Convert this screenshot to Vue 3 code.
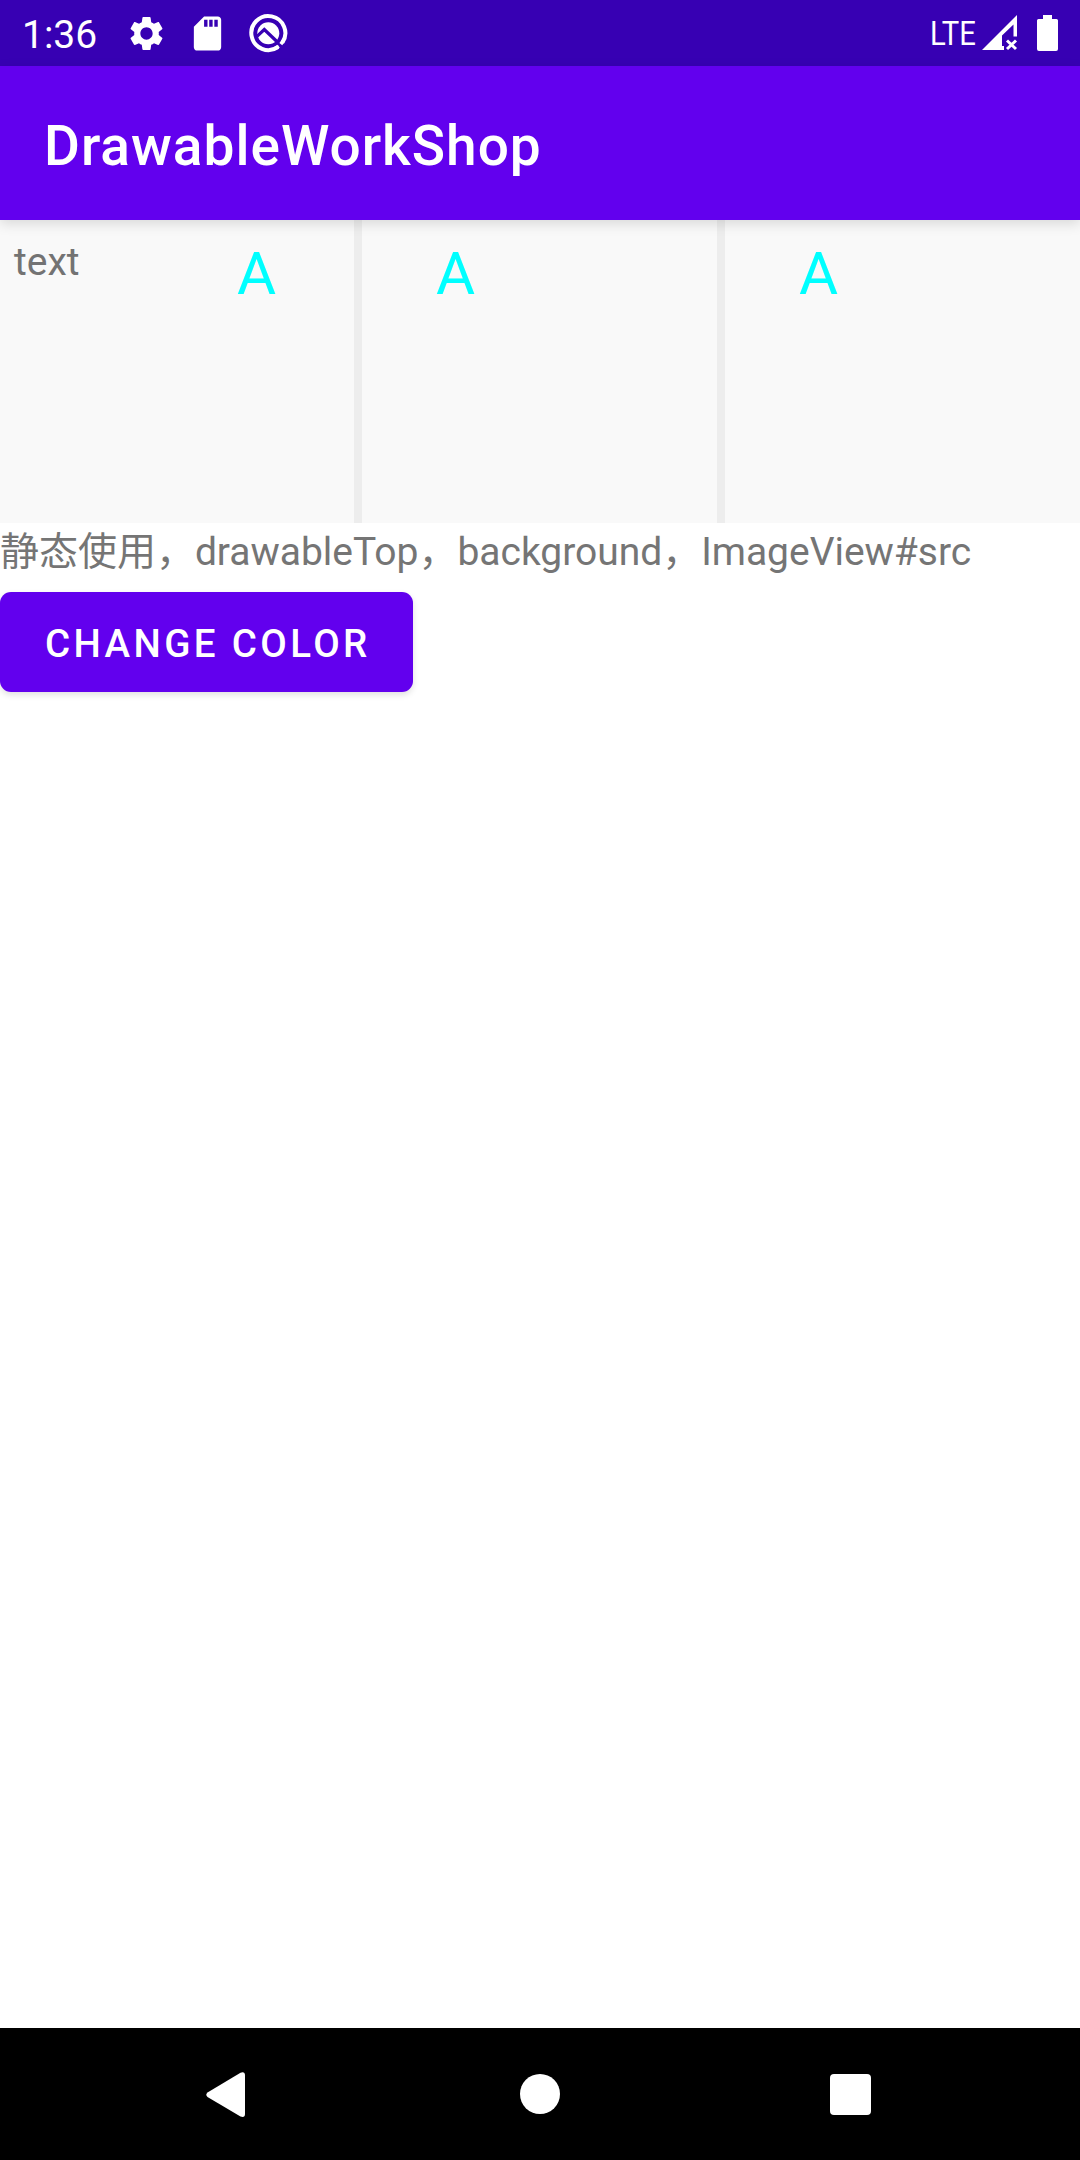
<script setup>
const glyphs = ['A', 'A']
</script>

<template>
  <div class="screen">
    <header class="status">
      <span class="clock">1:36</span>
      <svg class="gear" viewBox="0 0 24 24" width="41" height="41"><path fill="#fff" d="M19.14 12.94c.04-.3.06-.61.06-.94 0-.32-.02-.64-.07-.94l2.03-1.58c.18-.14.23-.41.12-.61l-1.92-3.32c-.12-.22-.37-.29-.59-.22l-2.39.96c-.5-.38-1.03-.7-1.62-.94l-.36-2.54c-.04-.24-.24-.41-.48-.41h-3.84c-.24 0-.43.17-.47.41l-.36 2.54c-.59.24-1.13.57-1.62.94l-2.39-.96c-.22-.08-.47 0-.59.22L2.74 8.87c-.12.21-.08.47.12.61l2.03 1.58c-.05.3-.09.63-.09.94s.02.64.07.94l-2.03 1.58c-.18.14-.23.41-.12.61l1.92 3.32c.12.22.37.29.59.22l2.39-.96c.5.38 1.03.7 1.62.94l.36 2.54c.05.24.24.41.48.41h3.84c.24 0 .44-.17.47-.41l.36-2.54c.59-.24 1.13-.56 1.62-.94l2.39.96c.22.08.47 0 .59-.22l1.92-3.32c.12-.22.07-.47-.12-.61l-2.01-1.58zM12 15.6c-1.98 0-3.6-1.62-3.6-3.6s1.62-3.6 3.6-3.6 3.6 1.62 3.6 3.6-1.62 3.6-3.6 3.6z" /></svg>
      <svg class="card" viewBox="0 0 24 24" width="41" height="41"><path fill="#fff" d="M18 2h-8L4.02 8 4 20c0 1.100.9 2 2 2h12c1.100 0 2-.9 2-2V4c0-1.100-.9-2-2-2zm-6 6h-2V4h2v4zm3 0h-2V4h2v4zm3 0h-2V4h2v4z" /></svg>
      <svg class="quick" viewBox="0 0 40 40" width="40" height="40">
        <path fill="none" stroke="#fff" stroke-width="4" d="M30 34A17 17 0 1 1 34.300 29.700" />
        <circle cx="20.300" cy="20.300" r="11" fill="#fff" />
        <path fill="none" stroke="#3700b3" stroke-width="3.200" d="M9 23.300L16.300 16.500L31 30.500" />
        <path fill="none" stroke="#fff" stroke-width="3.600" d="M27.500 35.300L30.800 33.200M32.800 31.200L35.200 28" />
      </svg>
      <span class="lte">LTE</span>
      <svg class="signal" viewBox="0 0 36 36" width="36" height="36">
        <path fill="#fff" fill-rule="evenodd" d="M0 35L35 0V21.500H31.500V9.500L20 20.500V31H22V35Z" />
        <path fill="none" stroke="#fff" stroke-width="3" d="M25 25.500L34 34M34 25.500L25 34" />
      </svg>
      <svg class="battery" viewBox="0 0 21 36" width="21" height="36"><path fill="#fff" d="M6 0H15V4H19.500Q21 4 21 5.500V34Q21 36 19 36H2Q0 36 0 34V5.500Q0 4 1.500 4H6Z" /></svg>
    </header>
    <div class="appbar"><h1>DrawableWorkShop</h1></div>
    <main>
      <section class="panels">
        <div class="panel first"><span class="label">text</span><span class="glyph">A</span></div>
        <div v-for="(g, i) in glyphs" :key="i" class="panel"><span class="glyph">{{ g }}</span></div>
      </section>
      <p class="caption">静态使用，drawableTop，background，ImageView#src</p>
      <button class="action">CHANGE COLOR</button>
    </main>
    <nav class="nav">
      <svg class="back" viewBox="0 0 40 46" width="40" height="46"><path fill="#fff" d="M1.500 20.500L34.500 .8Q39 -.8 39 3.500V42Q39 46 34.500 44.500L1.500 25Q-1 22.800 1.500 20.500Z" /></svg>
      <span class="home"></span>
      <span class="recent"></span>
    </nav>
  </div>
</template>

<style>
body { margin: 0; }
</style>

<style scoped>
.screen {
  width: 1080px;
  height: 2160px;
  display: flex;
  flex-direction: column;
  background: #fff;
  font-family: Roboto, "Noto Sans CJK SC", sans-serif;
  overflow: hidden;
}
.status {
  height: 66px;
  flex: none;
  display: flex;
  align-items: flex-start;
  background: #3700b3;
  color: #fff;
}
.status svg { flex: none; display: block; }
.clock { width: 126px; box-sizing: border-box; padding-left: 22px; font-size: 39px; line-height: 70px; }
.gear { margin-top: 13px; }
.card { margin: 13px 0 0 20px; }
.quick { margin: 13px 0 0 20px; }
.lte {
  margin-left: 642px;
  width: 52px;
  font-size: 34px;
  line-height: 66px;
  white-space: nowrap;
  transform: scaleX(.86);
  transform-origin: 0 50%;
}
.signal { margin-top: 15px; }
.battery { margin: 15px 0 0 19px; }
.appbar {
  position: relative;
  z-index: 1;
  height: 154px;
  flex: none;
  background: #6200ee;
  box-shadow: 0 4px 12px rgba(0, 0, 0, .13);
}
h1 {
  margin: 0;
  padding-left: 44px;
  font-size: 55px;
  line-height: 160px;
  font-weight: 500;
  letter-spacing: 1px;
  color: #fff;
}
main { flex: 1; display: flex; flex-direction: column; align-items: flex-start; }
.panels {
  width: 1080px;
  height: 303px;
  display: grid;
  grid-template-columns: 354px 355px 355px;
  column-gap: 8px;
  background: #ededed;
}
.panel { background: #f9f9f9; display: flex; align-items: flex-start; padding-left: 74px; }
.panel.first { padding-left: 14px; }
.label { width: 223px; font-size: 39px; line-height: 45px; margin-top: 20px; color: #737373; }
.glyph { font-size: 60px; line-height: 70px; margin-top: 19px; color: #0ff; }
.caption {
  margin: 0;
  height: 69px;
  line-height: 59px;
  font-size: 39px;
  letter-spacing: -.02px;
  color: #757575;
  white-space: nowrap;
}
.action {
  border: 0;
  width: 413px;
  height: 100px;
  padding: 4px 0 0 45px;
  text-align: left;
  border-radius: 11px;
  background: #6200ee;
  color: #fff;
  font: 500 38.5px/96px Roboto, sans-serif;
  letter-spacing: 3.38px;
  box-shadow: 0 3px 6px rgba(0, 0, 0, .12);
}
.nav { height: 132px; flex: none; display: flex; background: #000; }
.back { margin: 44px 0 0 206px; }
.home { width: 40px; height: 40px; margin: 46px 0 0 274px; border-radius: 50%; background: #fff; }
.recent { width: 41px; height: 41px; margin: 46px 0 0 270px; border-radius: 4px; background: #fff; }
</style>
